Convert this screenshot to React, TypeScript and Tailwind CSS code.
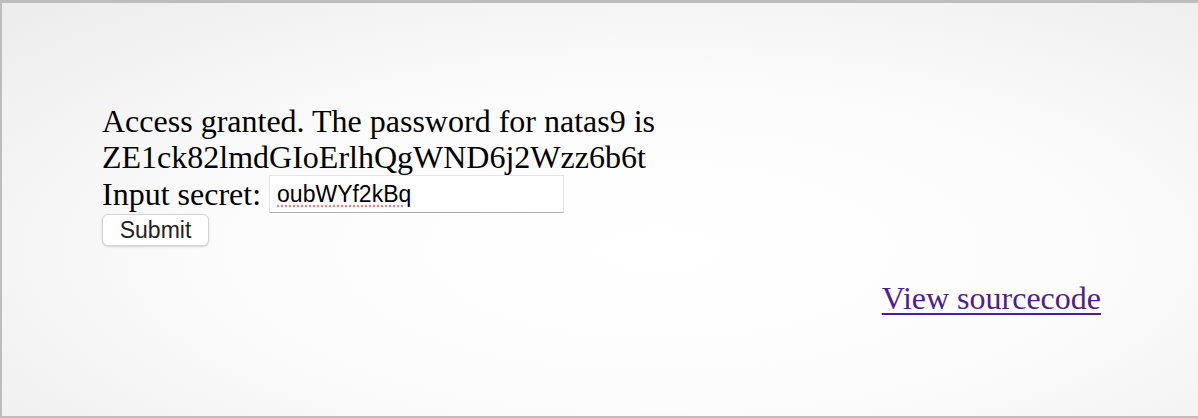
export default function App() {
  return (
    <div className="w-[1198px] h-[418px] overflow-hidden bg-[#f2f2f2]">
      <div className="h-full border-t-[3px] border-l-2 border-b-2 border-[#bdbdbd] bg-[radial-gradient(ellipse_at_55%_60%,#ffffff_0%,#fcfcfc_45%,#ececec_100%)] pl-[100px] pr-[97px] pt-[100px] font-['Liberation_Serif',serif] text-[32px] leading-[36px] text-black">
        <div>Access granted. The password for natas9 is</div>
        <div>ZE1ck82lmdGIoErlhQgWND6j2Wzz6b6t</div>
        <div className="flex items-center">
          <span>Input secret:</span>
          <input
            readOnly
            value="oubWYf2kBq"
            className="ml-[8px] h-[38px] w-[295px] border border-[#e4e4e4] border-b-[#b0b0b0] bg-white px-[7px] font-['Liberation_Sans',sans-serif] text-[23px] text-black underline decoration-dotted decoration-[#f08080] underline-offset-4 outline-none"
          />
        </div>
        <button className="mt-[1px] block h-[32px] w-[107px] rounded-[6px] border border-[#d4d4d4] bg-white font-['Liberation_Sans',sans-serif] text-[23px] leading-none text-[#222] shadow-[0_1px_2px_rgba(0,0,0,0.15)]">
          Submit
        </button>
        <div className="mt-[34px] flex justify-end">
          <a href="#" className="text-[#4f1e8c] underline decoration-[2px] underline-offset-[4px]">
            View sourcecode
          </a>
        </div>
      </div>
    </div>
  );
}
